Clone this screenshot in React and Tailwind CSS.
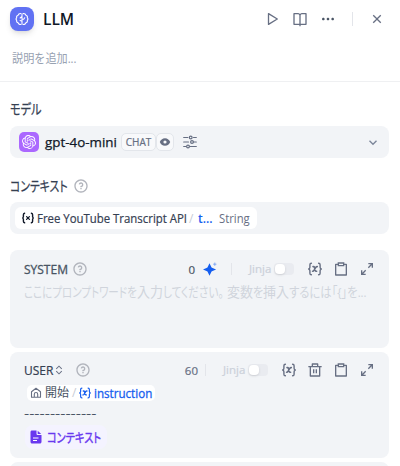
import React, { useLayoutEffect, useRef, useState } from "react";
import {
  RiBookOpenLine,
  RiMoreFill,
  RiCloseLine,
  RiQuestionLine,
  RiArrowDownSLine,
  RiClipboardLine,
  RiDeleteBinLine,
  RiExpandDiagonalLine,
  RiExpandUpDownLine,
} from "react-icons/ri";
import { SiOpenai } from "react-icons/si";

// Condenses or widens a run of text so that it fills the width of its box.
function Fit({ className = "", children }) {
  const outer = useRef(null);
  const inner = useRef(null);
  const [scale, setScale] = useState(1);
  useLayoutEffect(() => {
    const box = outer.current;
    const style = getComputedStyle(box);
    const width = box.clientWidth - parseFloat(style.paddingLeft) - parseFloat(style.paddingRight);
    setScale(width / inner.current.offsetWidth);
  }, []);
  return (
    <span ref={outer} className={"inline-block shrink-0 whitespace-nowrap " + className}>
      <span ref={inner} className="inline-block origin-left" style={{ transform: `scaleX(${scale})` }}>
        {children}
      </span>
    </span>
  );
}

function VarIcon({ className }) {
  return (
    <svg viewBox="0 0 14 14" className={className} fill="none" stroke="currentColor" strokeWidth="1.4" strokeLinecap="round" strokeLinejoin="round">
      <path d="M3.4 1.2C2.2 1.2 1.9 1.8 1.9 2.8v2.4c0 1-.4 1.5-1.2 1.8.8.3 1.2.8 1.2 1.8v2.4c0 1 .3 1.6 1.5 1.6" />
      <path d="M10.6 1.2c1.2 0 1.5.6 1.5 1.6v2.4c0 1 .4 1.5 1.2 1.8-.8.3-1.2.8-1.2 1.8v2.4c0 1-.3 1.6-1.5 1.6" />
      <path strokeWidth="1.6" d="M5 4.6h.5c.5 0 .8.3.9.7l.9 3.2c.1.4.4.7.8.7h.5M9.3 4.6h-.2c-.5 0-.9.2-1.2.6L5.9 8.6c-.3.4-.7.6-1.1.6h-.2" />
    </svg>
  );
}

function BoldVarIcon({ className }) {
  return (
    <svg viewBox="0 0 12 12" className={className} fill="none" stroke="currentColor" strokeWidth="1.4" strokeLinecap="round" strokeLinejoin="round">
      <path d="M2.600 1.200C1.800 1.400 1.400 1.900 1.400 2.700v2L.8 6l.6 1.300v2c0 .8.400 1.300 1.200 1.500M9.400 1.200c.8.200 1.200.7 1.200 1.500v2l.6 1.300-.6 1.300v2c0 .8-.4 1.300-1.200 1.500" />
      <path strokeWidth="1.300" d="m4.600 4.600 2.800 2.800m0-2.800L4.600 7.400" />
    </svg>
  );
}

function LlmIcon() {
  return (
    <svg viewBox="0 0 14 14" className="size-3.5" fill="none" stroke="white" strokeWidth="1.1" strokeLinecap="round" strokeLinejoin="round">
      <path d="M5.800 1.600C4.200 1.400 3.300 2.300 3.200 3.200 1.900 3.500 1.400 4.600 1.700 5.600 1 6.400 1 7.600 1.700 8.400c-.3 1 .2 2.100 1.500 2.400.1.900 1 1.800 2.600 1.600" />
      <path d="M8.200 1.600c1.600-.2 2.500.7 2.600 1.600 1.300.3 1.800 1.400 1.500 2.400.7.8.7 2 0 2.800.3 1-.2 2.100-1.500 2.400-.1.900-1 1.800-2.600 1.600" />
      <path d="M7 1.800v10.400M7 4.300 5.200 6M7 7.200h1.700l1-1.400M7 9.300l-1.900-.7" />
    </svg>
  );
}

function Sparkle() {
  return (
    <svg viewBox="0 0 14 14" className="size-3.5 text-[#155eef]" fill="currentColor">
      <path d="M6.500 1.200 8.300 5Q8.500 5.500 9 5.700l4.100 1.800L9 9.300q-.5.200-.7.700l-1.800 3.800L4.700 10Q4.500 9.500 4 9.300L-.1 7.500 4 5.700Q4.500 5.500 4.700 5Z" />
      <path d="M11.800.6v3.200M10.200 2.200h3.200" stroke="currentColor" strokeWidth="1" opacity=".5" />
    </svg>
  );
}

function Home() {
  return (
    <svg viewBox="0 0 12 12" className="size-3 shrink-0 text-[#676f83]" fill="none" stroke="currentColor" strokeWidth="1.1" strokeLinejoin="round">
      <path d="M1.500 4.700 6 1.300l4.500 3.400v5.500h-9Z" />
      <path d="M4.300 10V7.200a1.700 1.700 0 0 1 3.400 0V10" />
    </svg>
  );
}

function FileIcon() {
  return (
    <svg viewBox="0 0 12 14" className="h-3.5 w-3 shrink-0" fill="#6938ef">
      <path d="M2 .5h4.500v3.200c0 .8.500 1.300 1.300 1.300h3.700v6.700c0 1-.7 1.800-1.700 1.800H2.200c-1 0-1.700-.8-1.700-1.800V2C.5 1.100 1.100.5 2 .5Z" />
      <path d="M7.700.7 11.200 4H8.300a.6.600 0 0 1-.6-.6Z" />
      <path d="M3 8h5.500M3 10.500h4" stroke="white" strokeWidth="1.100" />
    </svg>
  );
}

function Jinja() {
  return (
    <div className="flex items-center">
      <div className="h-3 w-px bg-[#e3e5ea]" />
      <Fit className="ml-[17px] w-[22px] text-[11px] leading-4 text-[#ccd1da] [-webkit-text-stroke:0.2px]">Jinja</Fit>
      <div className="ml-[3px] flex h-3 w-5 items-center rounded bg-[#e9ebf0] px-px">
        <div className="size-2.5 rounded-[4px] bg-white shadow-sm" />
      </div>
    </div>
  );
}

export default function App() {
  return (
    <div className="h-[466px] w-[400px] overflow-hidden bg-white font-['Open_Sans','Noto_Sans_CJK_JP',sans-serif] text-[#354052]">
      <header className="h-[82px] border-b border-[#eff0f2]">
        <div className="flex h-[38px] items-center pl-2.5 text-[#676f83]">
          <div className="flex size-6 shrink-0 items-center justify-center rounded-lg bg-[#6172f3] shadow-md shadow-black/10">
            <LlmIcon />
          </div>
          <h1 className="ml-[9px] flex w-[181px] text-[16px] leading-6 font-semibold text-[#101828]">
            <Fit className="w-[31px]">LLM</Fit>
          </h1>
          <div className="ml-10 flex items-center gap-3">
            <svg viewBox="0 0 16 16" className="size-4" fill="none" stroke="currentColor" strokeWidth="1.300" strokeLinejoin="round">
              <path d="M4.500 2.600v10.800L13.300 8Z" />
            </svg>
            <RiBookOpenLine className="size-4" />
            <RiMoreFill className="size-4 text-[#495464]" />
          </div>
          <div className="ml-4 h-3.5 w-px bg-[#e3e5ea]" />
          <RiCloseLine className="ml-4 size-4" />
        </div>
        <p className="mt-[11px] ml-3 text-[12px] leading-5 text-[#98a2b2]">
          <Fit className="w-16">説明を追加...</Fit>
        </p>
      </header>

      <section className="pt-[17px] pr-[11px] pl-2.5">
        <h2 className="flex h-5 text-[14px] leading-5 [-webkit-text-stroke:0.25px] [font-feature-settings:'palt']">
          <Fit className="w-8">モデル</Fit>
        </h2>
        <div className="mt-[7px] flex h-8 items-center rounded-lg bg-[#f2f4f7] pl-[9px]">
          <div className="flex size-5 shrink-0 items-center justify-center rounded-[5px] bg-[#ab68ff]">
            <SiOpenai className="size-3.5 text-white" />
          </div>
          <Fit className="mr-1 ml-1.5 w-[72px] text-[13px] leading-5 font-medium text-[#101828] [-webkit-text-stroke:0.25px]">gpt-4o-mini</Fit>
          <span className="flex h-[18px] w-[35px] shrink-0 items-center justify-center rounded-[5px] border border-[#e3e6eb] bg-[#f8f9fb] text-[10px] font-medium text-[#676f83] [-webkit-text-stroke:0.2px]">CHAT</span>
          <span className="flex h-[18px] w-[18px] shrink-0 items-center justify-center rounded-[5px] border border-[#e3e6eb] bg-[#f8f9fb]">
            <svg viewBox="0 0 12 12" className="size-3" fill="#676f83" fillRule="evenodd">
              <path d="M6 2.200c2.600 0 4.400 1.800 5.200 3.800C10.400 8 8.600 9.800 6 9.800S1.600 8 .8 6C1.600 4 3.400 2.200 6 2.200Zm0 2.200a1.600 1.600 0 1 0 0 3.200 1.600 1.600 0 0 0 0-3.200Z" />
            </svg>
          </span>
          <svg viewBox="0 0 14 14" className="ml-[9px] size-3.5 shrink-0 text-[#676f83]" fill="none" stroke="currentColor" strokeWidth="1.200" strokeLinecap="round">
            <path d="M.7 2.500h4.100M10.500 2.500h2.800M.7 7h4.800M10.500 7h2.800M.7 11.500h2.100M7.300 11.500h6" />
            <circle cx="7.700" cy="2.500" r="1.400" />
            <circle cx="9" cy="7" r="1.400" />
            <circle cx="5" cy="11.500" r="1.400" />
          </svg>
          <svg viewBox="0 0 16 16" className="mr-2 ml-auto size-4 text-[#7c869a]" fill="none" stroke="currentColor" strokeWidth="1.400">
            <path d="m4.500 6.800 3.500 3.400 3.500-3.400" />
          </svg>
        </div>

        <div className="mt-[18px] flex h-5 items-center">
          <h2 className="flex w-[63px] text-[14px] leading-5 [-webkit-text-stroke:0.25px] [font-feature-settings:'palt']">
            <Fit className="w-[58px]">コンテキスト</Fit>
          </h2>
          <RiQuestionLine className="size-4 text-[#b1b4bc]" />
        </div>
        <div className="mt-1.5 flex h-8 items-center rounded-lg bg-[#f2f4f7] pl-[5px]">
          <div className="flex h-[22px] w-[242px] items-center rounded-md bg-white pl-[7px] text-[12px] leading-4 whitespace-nowrap">
            <BoldVarIcon className="size-3 shrink-0 text-[#101828]" />
            <Fit className="mr-0.5 ml-[3px] w-[150px] pt-0.5 font-medium [-webkit-text-stroke:0.2px]">Free YouTube Transcript API</Fit>
            <span className="w-[9px] pt-0.5 text-[#c7ccd5]">/</span>
            <span className="w-[21px] pt-0.5 font-semibold text-[#155eef]">t...</span>
            <Fit className="w-[31px] pt-0.5 text-[#676f83]">String</Fit>
          </div>
        </div>

        <div className="mt-4 h-[98px] rounded-lg bg-[#f2f4f7] pt-[9px]">
          <div className="flex h-5 items-center px-3.5">
            <Fit className="mr-1 w-11 pt-px text-[12px] font-medium text-[#495464] [-webkit-text-stroke:0.3px]">SYSTEM</Fit>
            <RiQuestionLine className="size-4 shrink-0 text-[#b1b4bc]" />
            <div className="ml-auto flex items-center text-[#676f83]">
              <span className="mr-2 pt-px text-[11.5px] font-medium text-[#495464] [-webkit-text-stroke:0.2px]">0</span>
              <Sparkle />
              <div className="ml-3.5"><Jinja /></div>
              <VarIcon className="ml-3.5 size-3.5" />
              <RiClipboardLine className="ml-[11px] size-4" />
              <RiExpandDiagonalLine className="ml-2.5 size-4" />
            </div>
          </div>
          <div className="mt-[3px] ml-3.5 flex h-5 text-[13.5px] leading-5 text-[#d0d4dc] [font-feature-settings:'palt']">
            <Fit className="w-[113px]">ここにプロンプトワードを</Fit>
            <Fit className="w-[26px]">入力</Fit>
            <Fit className="mr-[3px] w-[61px]">してください。</Fit>
            <Fit className="w-[26px]">変数</Fit>
            <Fit className="w-[10px]">を</Fit>
            <Fit className="w-[26px]">挿入</Fit>
            <Fit className="w-[78px]">するには「{"{"}」を...</Fit>
          </div>
        </div>

        <div className="mt-1 h-[106px] rounded-lg bg-[#f2f4f7] pt-2">
          <div className="flex h-5 items-center px-3.5">
            <Fit className="w-[29px] pt-px text-[12px] font-medium [-webkit-text-stroke:0.2px]">USER</Fit>
            <RiExpandUpDownLine className="size-3 text-[#676f83]" />
            <RiQuestionLine className="ml-2.5 size-4 shrink-0 text-[#b1b4bc]" />
            <div className="ml-auto flex items-center text-[#676f83]">
              <span className="mr-[7px] pt-px text-[11.5px] font-medium [-webkit-text-stroke:0.2px]">60</span>
              <Jinja />
              <VarIcon className="ml-3.5 size-3.5" />
              <RiDeleteBinLine className="ml-[11px] size-4" />
              <RiClipboardLine className="ml-2.5 size-4" />
              <RiExpandDiagonalLine className="ml-2.5 size-4" />
            </div>
          </div>
          <div className="mt-[5px] ml-[17px] flex h-4 w-32 items-center rounded-[5px] bg-white pl-[3px] text-[12px] leading-4 whitespace-nowrap">
            <Home />
            <span className="ml-[3px] w-[27px] text-[#495464]">開始</span>
            <span className="w-[7px] text-[#c7ccd5]">/</span>
            <VarIcon className="size-3 shrink-0 text-[#155eef]" />
            <Fit className="ml-[3px] w-[58px] pt-px font-medium text-[#155eef] [-webkit-text-stroke:0.3px]">instruction</Fit>
          </div>
          <p className="ml-3.5 flex h-6 text-[13px] leading-6 text-[#495464]">
            <Fit className="w-[73px]">--------------</Fit>
          </p>
          <div className="ml-[15px] flex h-6 w-[82px] items-center rounded-lg bg-[#f4f3ff] pl-[5px] text-[#6938ef]">
            <FileIcon />
            <Fit className="ml-[5px] w-[54px] text-[13px] leading-5 [-webkit-text-stroke:0.4px] [font-feature-settings:'palt']">コンテキスト</Fit>
          </div>
        </div>
        <div className="mt-1 h-10 rounded-lg bg-[#f2f4f7]" />
      </section>
    </div>
  );
}
